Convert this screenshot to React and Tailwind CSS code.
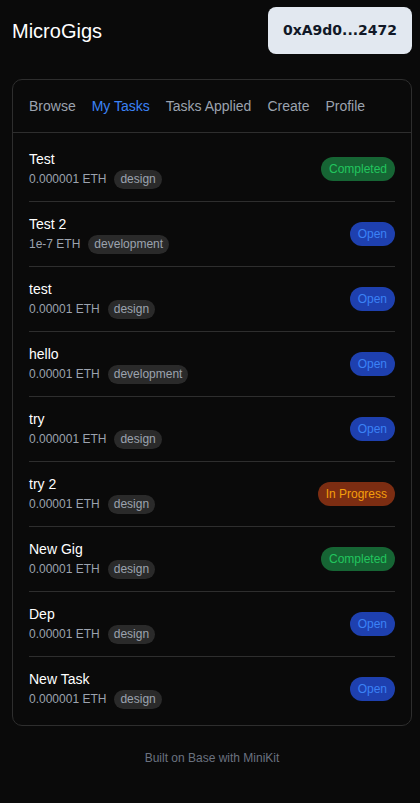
const tasks = [
  { title: 'Test', reward: '0.000001 ETH', tag: 'design', status: 'Completed' },
  { title: 'Test 2', reward: '1e-7 ETH', tag: 'development', status: 'Open' },
  { title: 'test', reward: '0.00001 ETH', tag: 'design', status: 'Open' },
  { title: 'hello', reward: '0.00001 ETH', tag: 'development', status: 'Open' },
  { title: 'try', reward: '0.000001 ETH', tag: 'design', status: 'Open' },
  { title: 'try 2', reward: '0.00001 ETH', tag: 'design', status: 'In Progress' },
  { title: 'New Gig', reward: '0.00001 ETH', tag: 'design', status: 'Completed' },
  { title: 'Dep', reward: '0.00001 ETH', tag: 'design', status: 'Open' },
  { title: 'New Task', reward: '0.000001 ETH', tag: 'design', status: 'Open' },
];

const statusStyles = {
  Completed: 'bg-[#166534] text-[#22c55e]',
  Open: 'bg-[#1e40af] text-[#3b82f6]',
  'In Progress': 'bg-[#7c2d12] text-[#f59e0b]',
};

const tabs = ['Browse', 'My Tasks', 'Tasks Applied', 'Create', 'Profile'];

const App = () => {
  return (
    <div className="min-h-screen bg-[#0a0a0a] text-white font-['Liberation_Sans',Arial,sans-serif]">
      <div className="pl-3 pr-2">
        <header className="flex items-center justify-between pt-[7px]">
          <h1 className="text-[20px] leading-7">MicroGigs</h1>
          <button className="h-[47px] w-[144px] rounded-lg bg-[#e2e8f0] text-[#111827] text-[14px] font-bold font-['DejaVu_Sans',sans-serif]">
            0xA9d0...2472
          </button>
        </header>

        <div className="mt-[25px] w-[400px] rounded-[10px] border border-[#2e2e2e] bg-[#0a0a0a]">
          <nav className="flex gap-4 px-4 py-4 border-b border-[#2e2e2e] text-[14px] leading-5">
            {tabs.map(tab => (
              <span key={tab} className={tab === 'My Tasks' ? 'text-[#3b82f6]' : 'text-[#9ca3af]'}>
                {tab}
              </span>
            ))}
          </nav>

          <div className="px-4 py-1">
            {tasks.map((task, i) => (
              <div
                key={i}
                className={`flex items-center justify-between py-3 ${i < tasks.length - 1 ? 'border-b border-[#2e2e2e]' : ''}`}
              >
                <div>
                  <p className="text-[14px] leading-5 text-white">{task.title}</p>
                  <div className="flex items-center gap-2 h-5 text-[12px] text-[#9ca3af]">
                    <span>{task.reward}</span>
                    <span className="rounded-full bg-[#2a2a2a] px-1.5 h-[19px] leading-[19px] text-[12px] text-[#9ca3af]">
                      {task.tag}
                    </span>
                  </div>
                </div>
                <span className={`rounded-full px-2 h-6 leading-6 text-[12px] ${statusStyles[task.status]}`}>
                  {task.status}
                </span>
              </div>
            ))}
          </div>
        </div>

        <footer className="py-6 text-center text-[12px] leading-4 text-[#6b7280]">
          Built on Base with MiniKit
        </footer>
      </div>
    </div>
  );
};

export default App;
